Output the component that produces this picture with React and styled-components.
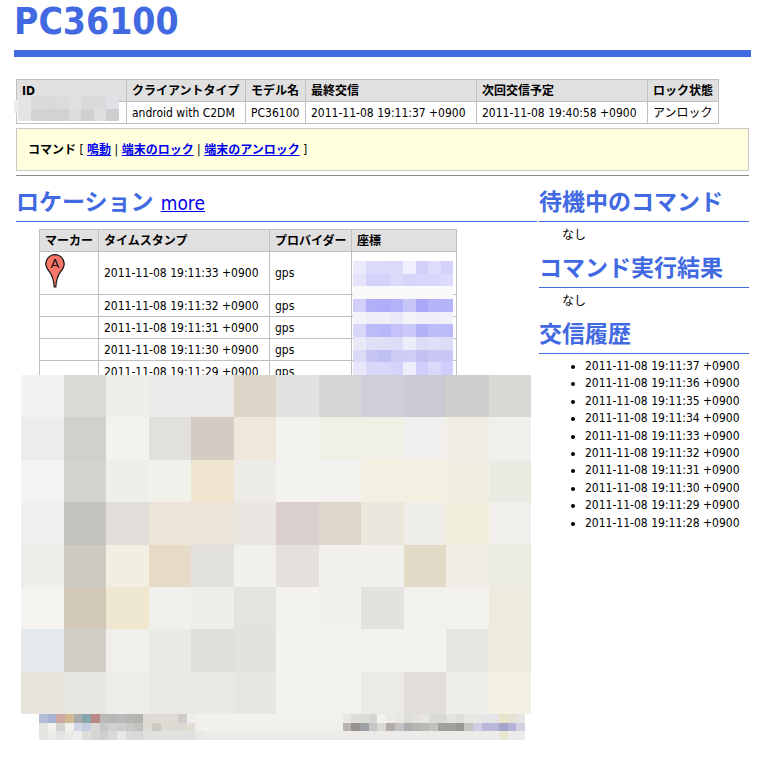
import React from 'react'
import styled, { createGlobalStyle } from 'styled-components'

const client = {
  name: 'PC36100',
  type: 'android with C2DM',
  model: 'PC36100',
  last: '2011-11-08 19:11:37 +0900',
  next: '2011-11-08 19:40:58 +0900',
  lock: 'アンロック',
}

const locations = [33, 32, 31, 30, 29].map((sec) => `2011-11-08 19:11:${sec} +0900`)
const history = [37, 36, 35, 34, 33, 32, 31, 30, 29, 28].map((sec) => `2011-11-08 19:11:${sec} +0900`)

// each string is one row of blocks, "color*n" repeats a block n times
const idBlocks = [
  'e4e4e4 dadada d9d9d9 dcdcdb e0e0e0 dadada dadada e0e1e6',
  'e4e4e4 d3d3d3 d2d2d2 d2d2d2 dddddd d0d0d0 dfdfe2 cecece',
]
const coordBlocks = [
  'ebeafc dcdbfb dcdbfb dadafb f0effd d2d1fb dedcfc d4d2fb',
  'e5e4fc d3d2fa d4d2fb dbdafb d7d6fa d8d7fb d8d7fb dedcfc',
  'fafafc*8',
  'd2d0fa b1aff8 afadf7 b4b2f8 c8c5f9 aba9f7 b4b3f8 b6b4f8',
  'f3f2f9 efeef8 f0eff9 e9e8f7 f4f3fa f0eff9 eeedf8 f1f0f9',
  'd8d7fa bcbaf8 b9b7f8 c4c2f8 cbc9f9 b3b0f7 bebcf8 bcbaf8',
  'e9e8f7 dfdff6 dfdff6 dcdbf8 edecf9 dcdcf7 dfdff7 dcdcf7',
  'dcdbf7 c6c5f1 c0bff1 cdccf4 cecdf5 c3c1f2 c9c8f5 c9c8f5',
  'e7e6fb d9d8fb d9d8fb d4d3fb eeedfb cecdfb dad8fb d0cffb',
]
const mapBlocks = [
  'f2f2f0 dadad6 edeeea ecebea ebeae9 ded5c9 e3e2e0 d5d5d5 cfcfda cacad4 cfcfcd d9d8d3',
  'ececea d1d0cc f3f2ee e1e0dc d4cbc2 efe7d9 f3f2ee f0f0e7 f0f0e6 f0efed f0ede5 f0efec',
  'f4f3f1 d4d3cf eeeeea f1f1ec f0e6cf ecebe8 f3f2ee*2 f3f0e2*2 f1efe1 eaeae2',
  'efefed c4c3bf e0dddb ede5d9*2 eae7e2 dacfcc ddd8c9 ebe7dc eeede8 f2f0dd f0efec',
  'eeeee9 cdcac4 f2eee2 e6dbc7 e2e1de f1f0ec e4e0dd f0efeb f1f0ec e1dbc8 f1eee6 ebece4',
  'f4f3ef d1c8b9 f0e7d0 f0efec efeeeb e4e3e0 f3f2ee f1f0ec e3e2de f2f1ed f3f2ee ecebde',
  'e3e9ed d2cfc6 f0efeb eae9e5 dededa e2e1dd f3f2ee*4 e8e7e3 eeecdf',
  'e8e3dc e7e6e1 eeede9 e9e8e4 eae9e5 e7e6e2 f3f2ee*2 ebeae6 e1ddd8 efeeea f3f1e2',
]
const footBlocks = [
  'afbdd8 a6b3d3 d1a9a3 d0ba90 a8adaa 84a6ac b88984 b9b9b7 b6b6b4 bababa b6b6b4 b3b3b0 dedad4*4 cfccc9 eeeeec f2f1ed*17 e8e7e3 deded9 dcdcd8 d5d5d1 f4f3ee eceae6 e8e7e2 deded9 e3e2de e6e5e0 dbdbd6 d8d9d3 e4e3df dedfd9 e8e7e6*2 e5e5e8*2 e6e4c8 e4e2d5 e5e5e3',
  'e4e4e1 f2f1ed d5d4d2 f2f1ed d0d6e6 c8cedf d8d7d5 c7c7c5 d1d0ce cfcecc c9c8c6 c3c2bf dedad3 cdc8c2 dedad3*3 e1dcd4 f1f0ec*17 b8b3ad 96928d 9da1a5 c5c6c4 dad8d4 b2aba6 c2c3c2 a9adae b6b4ac b9bab5 c5c1bb a0a29e 9fa19d 989894 c4c4c1 cfcee3 bab8db b9b7da a6a3cc b5b2da d1d1e0',
  'e4e4e3 ebebe9 e3e3e2 e9e9e7 eeeeed dedede d5d5d5 cfcfcf d9d9d9 e7e7e6 d9d9d9 d8d8d8 e0e0df e2e2e0*5 e8e8e7 ecebea*34 e9e7d1 ebebe9*2',
]

function Mosaic({ rows, className }) {
  const grid = rows.map((row) =>
    row.split(' ').flatMap((part) => {
      const [color, n] = part.split('*')
      return Array(Number(n || 1)).fill(`#${color}`)
    })
  )
  return (
    <svg
      className={className}
      viewBox={`0 0 ${grid[0].length} ${grid.length}`}
      preserveAspectRatio="none"
      shapeRendering="crispEdges"
      aria-hidden="true"
    >
      {grid.map((row, y) =>
        row.map((color, x) => <rect key={`${x}-${y}`} x={x} y={y} width="1" height="1" fill={color} />)
      )}
    </svg>
  )
}

function Marker() {
  return (
    <Pin viewBox="0 0 20 34" aria-hidden="true">
      <path
        d="M10 .7C4.800 .7 .8 4.700 .8 9.700C.8 13 2.500 15.300 4.500 17.800C7.500 21.700 8.800 25 9.200 33H10.800C11.200 25 12.500 21.700 15.500 17.800C17.500 15.300 19.200 13 19.200 9.700C19.200 4.700 15.200 .7 10 .7Z"
        fill="#fd766a"
        stroke="#111"
        strokeWidth="1.200"
      />
      <text x="10" y="14" textAnchor="middle" fontFamily="DejaVu Sans" fontSize="13" fill="#111">A</text>
    </Pin>
  )
}

export default function App() {
  return (
    <>
      <GlobalStyle />
      <Page>
        <Title>{client.name}</Title>
        <Content>
          <TableBox>
            <Table>
              <thead>
                <tr>
                  <Th $w={110}>ID</Th>
                  <Th $w={119}>クライアントタイプ</Th>
                  <Th $w={60}>モデル名</Th>
                  <Th $w={171}>最終交信</Th>
                  <Th $w={171}>次回交信予定</Th>
                  <Th $w={71}>ロック状態</Th>
                </tr>
              </thead>
              <tbody>
                <tr>
                  <Td></Td>
                  <Td>{client.type}</Td>
                  <Td>{client.model}</Td>
                  <Td>{client.last}</Td>
                  <Td>{client.next}</Td>
                  <Td>{client.lock}</Td>
                </tr>
              </tbody>
            </Table>
            <IdMask rows={idBlocks} />
            <IdMaskEdge />
          </TableBox>
          <Commands>
            <b>コマンド</b> [ <CommandLink href="#ring">鳴動</CommandLink> |{' '}
            <CommandLink href="#lock">端末のロック</CommandLink> |{' '}
            <CommandLink href="#unlock">端末のアンロック</CommandLink> ]
          </Commands>
          <Rule />
          <Columns>
            <Main>
              <Heading>
                ロケーション <MoreLink href="#more">more</MoreLink>
              </Heading>
              <LocationBox>
                <Table>
                  <thead>
                    <tr>
                      <Th $w={59}>マーカー</Th>
                      <Th $w={171}>タイムスタンプ</Th>
                      <Th $w={82}>プロバイダー</Th>
                      <Th $w={105}>座標</Th>
                    </tr>
                  </thead>
                  <tbody>
                    {locations.map((time, index) => (
                      <tr key={time}>
                        <Td $tall={index === 0}>{index === 0 && <Marker />}</Td>
                        <Td>{time}</Td>
                        <Td>gps</Td>
                        <Td></Td>
                      </tr>
                    ))}
                  </tbody>
                </Table>
                <CoordMask rows={coordBlocks} />
              </LocationBox>
              <MapView rows={mapBlocks} />
              <MapFoot rows={footBlocks} />
            </Main>
            <Side>
              <Heading>待機中のコマンド</Heading>
              <Empty>なし</Empty>
              <Heading>コマンド実行結果</Heading>
              <Empty>なし</Empty>
              <Heading>交信履歴</Heading>
              <History>
                {history.map((time) => (
                  <li key={time}>{time}</li>
                ))}
              </History>
            </Side>
          </Columns>
        </Content>
      </Page>
    </>
  )
}

const GlobalStyle = createGlobalStyle`
  * {
    box-sizing: border-box;
  }
  body {
    margin: 0;
    background: #fff;
    color: #000;
    font-family: "DejaVu Sans Condensed", "Noto Sans CJK JP", sans-serif;
    font-size: 12px;
    line-height: 16px;
  }
  a {
    color: #0000ee;
  }
`;

const Page = styled.div`
  padding: 0 33px 28px 14px;
`;

const Title = styled.h1`
  margin: 0 0 22px;
  height: 57px;
  border-bottom: 7px solid #4169e1;
  color: #4169e1;
  font-size: 37px;
  line-height: 44px;
`;

const Content = styled.div`
  padding: 0 2px;
`;

const TableBox = styled.div`
  position: relative;
`;

const Table = styled.table`
  border-collapse: collapse;
  table-layout: fixed;
  width: 1px;
`;

const Th = styled.th`
  width: ${({ $w }) => $w}px;
  height: 22px;
  padding: 0 0 0 5px;
  border: 1px solid #c0c0c0;
  background: #e0e0e0;
  text-align: left;
  white-space: nowrap;
`;

const Td = styled.td`
  height: ${({ $tall }) => ($tall ? 43 : 22)}px;
  padding: 0 0 0 5px;
  border: 1px solid #c0c0c0;
  white-space: nowrap;
`;

const IdMask = styled(Mosaic)`
  position: absolute;
  left: 2px;
  top: 17px;
  width: 101px;
  height: 25px;
`;

const IdMaskEdge = styled.div`
  position: absolute;
  left: -2px;
  top: 21px;
  width: 4px;
  height: 13px;
  background: #ececec;
`;

const Commands = styled.div`
  margin: 4px 0;
  padding: 13px 11px 12px;
  border: 1px solid #c8c8c8;
  background: #ffffdd;
`;

const CommandLink = styled.a`
  font-weight: bold;
`;

const Rule = styled.hr`
  height: 1px;
  margin: 0 0 10px;
  border: 0;
  background: #8c8c90;
`;

const Columns = styled.div`
  display: flex;
  align-items: flex-start;
  gap: 2px;
`;

const Main = styled.div`
  flex: 1;
  min-width: 0;
`;

const Side = styled.div`
  flex: 0 0 210px;
`;

const Heading = styled.h2`
  height: 36px;
  margin: 0;
  border-bottom: 1px solid #4169e1;
  color: #4169e1;
  font-size: 23px;
  line-height: 32px;
  white-space: nowrap;
`;

const MoreLink = styled.a`
  font-size: 19px;
  font-weight: normal;
`;

const LocationBox = styled.div`
  position: relative;
  margin: 7px 0 0 23px;
`;

const Pin = styled.svg`
  display: block;
  width: 20px;
  height: 34px;
  margin-bottom: 4px;
`;

const CoordMask = styled(Mosaic)`
  position: absolute;
  left: 314px;
  top: 32px;
  width: 100px;
  height: 114px;
`;

const MapView = styled(Mosaic)`
  position: relative;
  display: block;
  width: calc(100% - 11px);
  height: 339px;
  margin: -8px 6px 0 5px;
`;

const MapFoot = styled(Mosaic)`
  display: block;
  width: calc(100% - 35px);
  height: 26px;
  margin-left: 23px;
`;

const Empty = styled.p`
  margin: 5px 0 9px 23px;
`;

const History = styled.ul`
  display: grid;
  min-height: 174px;
  margin: 4px 0 0;
  padding-left: 46px;
`;
